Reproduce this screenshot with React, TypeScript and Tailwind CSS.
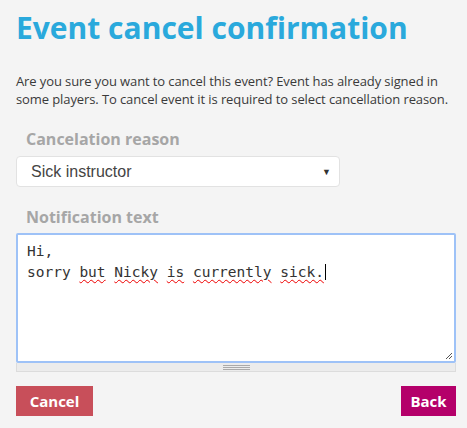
export default function App() {
  return (
    <div className="min-h-[428px] w-[467px] bg-[#f4f4f4] pl-4 pr-[11px] pt-[8px] font-['Open_Sans',sans-serif]">
      <h1 className="text-[30px] leading-[40px] font-bold text-[#2aa9dc]">Event cancel confirmation</h1>
      <p className="mt-[24px] text-[13px] leading-[18px] tracking-[-0.1px] text-[#3a3a3a]">
        Are you sure you want to cancel this event? Event has already signed in some players. To cancel event it is required to select cancellation reason.
      </p>

      <div className="mt-[21px] pl-[10px] text-[16px] leading-[20px] font-bold text-[#a6a6a6]">Cancelation reason</div>
      <div className="mt-[7px] flex h-[31px] w-[324px] items-center justify-between rounded-[4px] border border-[#e2e2e2] bg-white pl-[14px] pr-[8px]">
        <span className="font-['Liberation_Sans',Arial,sans-serif] text-[16px] text-[#444]">Sick instructor</span>
        <span className="text-[9px] text-[#333]">▼</span>
      </div>

      <div className="mt-[20px] pl-[10px] text-[16px] leading-[20px] font-bold text-[#a6a6a6]">Notification text</div>
      <div className="mt-[6px]">
        <div className="relative h-[130px] w-[440px] rounded-[2px] border-2 border-[#9ec2f7] bg-white px-[9px] pt-[6px] font-['DejaVu_Sans_Mono',monospace] text-[14.5px] leading-[20px] text-[#333]">
          <div>Hi,</div>
          <div>
            sorry{' '}
            <span className="underline decoration-wavy decoration-[#e00] decoration-1 underline-offset-2">but</span>{' '}
            <span className="underline decoration-wavy decoration-[#e00] decoration-1 underline-offset-2">Nicky</span>{' '}
            <span className="underline decoration-wavy decoration-[#e00] decoration-1 underline-offset-2">is</span>{' '}
            <span className="underline decoration-wavy decoration-[#e00] decoration-1 underline-offset-2">currently</span>{' '}
            <span className="underline decoration-wavy decoration-[#e00] decoration-1 underline-offset-2">sick.</span>
            <span className="ml-[1px] inline-block h-[16px] w-[1px] translate-y-[3px] bg-black" />
          </div>
          <svg className="absolute right-[1px] bottom-[1px]" width="8" height="8" viewBox="0 0 8 8">
            <path d="M7 1 L1 7 M7 4 L4 7" stroke="#555" strokeWidth="1" />
          </svg>
        </div>
        <div className="flex h-[9px] w-[440px] items-center justify-center border-x border-b border-[#dcdcdc] bg-[#ececec]">
          <div className="flex flex-col gap-[1px]">
            <div className="h-[1px] w-[27px] bg-[#aaa]" />
            <div className="h-[1px] w-[27px] bg-[#aaa]" />
            <div className="h-[1px] w-[27px] bg-[#aaa]" />
          </div>
        </div>
      </div>

      <div className="mt-[14px] flex w-[440px] justify-between">
        <button className="h-[30px] w-[77px] bg-[#c84f5a] text-[15px] font-bold text-white">Cancel</button>
        <button className="h-[30px] w-[55px] bg-[#b4006a] text-[15px] font-bold text-white">Back</button>
      </div>
    </div>
  );
}
